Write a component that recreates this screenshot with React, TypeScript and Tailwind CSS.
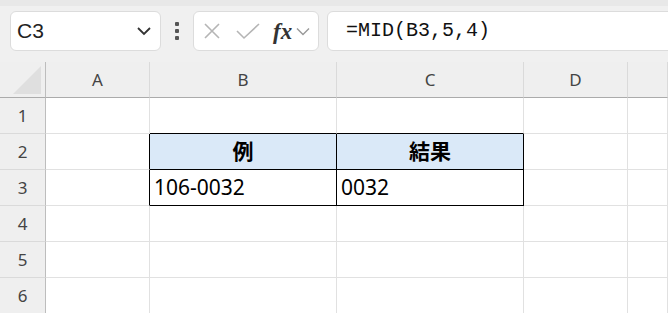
import React from "react";

const COLS = ["A", "B", "C", "D", ""];
const ROWS = [1, 2, 3, 4, 5, 6];

const font = { fontFamily: '"Noto Sans", "Noto Sans CJK JP", sans-serif' };

function cellClass(r: number, c: number) {
  // c: 0=A,1=B,2=C,3=D,4=E ; black box around B2:C3
  const inBox = (r === 2 || r === 3) && (c === 1 || c === 2);
  const rightBlack = inBox || ((r === 2 || r === 3) && c === 0);
  const bottomBlack = inBox || (r === 1 && (c === 1 || c === 2));
  return [
    "border-r border-b flex items-center text-[21px] text-black",
    rightBlack ? "border-r-black" : "border-r-[#e1e1e1]",
    bottomBlack ? "border-b-black" : "border-b-[#e1e1e1]",
    r === 2 && inBox ? "bg-[#dae9f8] justify-center font-bold" : "bg-white px-[4px]",
  ].join(" ");
}

function cellText(r: number, c: number) {
  if (r === 2 && c === 1) return "例";
  if (r === 2 && c === 2) return "結果";
  if (r === 3 && c === 1) return "106-0032";
  if (r === 3 && c === 2) return "0032";
  return "";
}

export default function App() {
  return (
    <div className="w-[668px] h-[313px] overflow-hidden bg-white" style={font}>
      {/* toolbar */}
      <div className="h-[62px] bg-[#f0f0f0] border-t-[6px] border-t-[#e8e8e8] flex items-start pt-[5px] pl-[10px] overflow-hidden">
        <div className="w-[151px] h-[40px] shrink-0 bg-white rounded-[6px] border border-[#dcdcdc] flex items-center justify-between pl-[6px] pr-[8px]">
          <span className="text-[21px] text-[#222]" style={{ fontFamily: '"Liberation Sans", sans-serif' }}>C3</span>
          <svg width="16" height="10" viewBox="0 0 16 10" fill="none" stroke="#333" strokeWidth="1.8">
            <path d="M2 2 L8 8 L14 2" />
          </svg>
        </div>
        <div className="w-[32px] h-[40px] shrink-0 flex flex-col items-center justify-center gap-[3px]">
          <span className="w-[4px] h-[4px] bg-[#555] rounded-[1px]" />
          <span className="w-[4px] h-[4px] bg-[#555] rounded-[1px]" />
          <span className="w-[4px] h-[4px] bg-[#555] rounded-[1px]" />
        </div>
        <div className="w-[126px] h-[40px] shrink-0 bg-white rounded-[6px] border border-[#dcdcdc] flex items-center pl-[8px]">
          <svg width="20" height="20" viewBox="0 0 20 20" stroke="#b5b5b5" strokeWidth="1.6" fill="none">
            <path d="M3 3 L17 17 M17 3 L3 17" />
          </svg>
          <svg className="ml-[14px]" width="24" height="18" viewBox="0 0 24 18" stroke="#b5b5b5" strokeWidth="1.6" fill="none">
            <path d="M1 9 L8 16 L23 2" />
          </svg>
          <span
            className="ml-[13px] text-[23px] italic font-bold text-[#333] leading-none"
            style={{ fontFamily: '"Liberation Serif", serif' }}
          >
            fx
          </span>
          <svg className="ml-[4px]" width="14" height="9" viewBox="0 0 14 9" fill="none" stroke="#999" strokeWidth="1.4">
            <path d="M1 1.5 L7 7.5 L13 1.5" />
          </svg>
        </div>
        <div className="w-[360px] h-[40px] shrink-0 ml-[8px] bg-white rounded-[6px] border border-[#dcdcdc] flex items-center pl-[18px]">
          <span className="text-[20px] text-[#111]" style={{ fontFamily: '"Liberation Mono", monospace' }}>
            =MID(B3,5,4)
          </span>
        </div>
      </div>

      {/* sheet */}
      <div className="grid grid-cols-[46px_104px_187px_187px_104px_1fr] grid-rows-[36px_36px_36px_36px_36px_36px_36px]">
        <div className="bg-[#efefef] border-r border-b border-r-[#bdbdbd] border-b-[#ababab] flex items-end justify-end pr-[4px] pb-[3px]">
          <svg width="28" height="28" viewBox="0 0 28 28">
            <path d="M28 0 L28 28 L0 28 Z" fill="#dfdfdf" />
          </svg>
        </div>
        {COLS.map((c, i) => (
          <div
            key={i}
            className="bg-[#efefef] border-b border-b-[#ababab] border-r border-r-[#dadada] flex items-center justify-center text-[17px] text-[#444]"
          >
            {c}
          </div>
        ))}
        {ROWS.map((r) => (
          <React.Fragment key={r}>
            <div className="bg-[#efefef] border-r border-r-[#bdbdbd] border-b border-b-[#dadada] flex items-center justify-center text-[17px] text-[#444]">
              {r}
            </div>
            {COLS.map((_, c) => (
              <div key={c} className={cellClass(r, c)}>
                {cellText(r, c)}
              </div>
            ))}
          </React.Fragment>
        ))}
      </div>
    </div>
  );
}
